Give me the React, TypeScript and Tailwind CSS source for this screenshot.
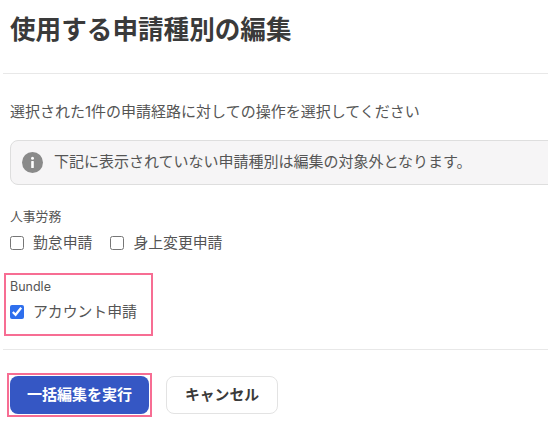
const FONT = "font-['Inter','Noto_Sans_CJK_JP',sans-serif]"

function Box({ label, checked = false }: { label: string; checked?: boolean }) {
  return (
    <label className="flex items-center gap-[9px] text-[14.85px] leading-[20px] text-[#555]">
      <input
        type="checkbox"
        defaultChecked={checked}
        className="m-0 h-[14px] w-[14px] accent-[#2f6fed]"
      />
      {label}
    </label>
  )
}

export default function App() {
  return (
    <div className={`${FONT} h-[427px] w-[548px] overflow-hidden bg-white pl-[3px]`}>
      <h1 className="pl-[7px] pt-[13px] text-[25.6px] font-bold leading-[34px] text-[#3a3a3a]">
        使用する申請種別の編集
      </h1>
      <div className="mt-[26px] h-px bg-[#e8e8e8]" />

      <p className="pl-[7px] pt-[28px] text-[15px] leading-[20px] text-[#555]">
        選択された1件の申請経路に対しての操作を選択してください
      </p>

      <div className="ml-[7px] mt-[18px] flex h-[45px] w-[560px] items-center gap-[11px] rounded-[8px] border border-[#dedede] bg-[#f6f5f6] pl-[11px] text-[15px] text-[#555]">
        <svg width="21" height="21" viewBox="0 0 21 21" className="shrink-0">
          <circle cx="10.5" cy="10.5" r="10.5" fill="#8a8a8a" />
          <circle cx="10.5" cy="6.2" r="1.5" fill="#fff" />
          <rect x="9.2" y="9" width="2.6" height="7" rx="0.6" fill="#fff" />
        </svg>
        下記に表示されていない申請種別は編集の対象外となります。
      </div>

      <div className="pl-[7px] pt-[23px]">
        <div className="text-[12.8px] leading-[18px] text-[#555]">人事労務</div>
        <div className="mt-[7px] flex gap-[18px]">
          <Box label="勤怠申請" />
          <Box label="身上変更申請" />
        </div>
      </div>

      <div className="ml-[1px] mt-[20px] h-[63px] w-[149px] border-2 border-[#f76d93] pl-[4px] pt-[3px]">
        <div className="text-[12.5px] leading-[18px] text-[#555]">Bundle</div>
        <div className="mt-[6px]">
          <Box label="アカウント申請" checked />
        </div>
      </div>

      <div className="mt-[13px] h-px bg-[#e8e8e8]" />

      <div className="flex items-center gap-[14px] pl-[4px] pt-[23px]">
        <div className="border-2 border-[#f76d93] p-px">
          <button className="block h-[38px] w-[139px] rounded-[8px] bg-[#3557c4] text-[15px] font-bold text-white">
            一括編集を実行
          </button>
        </div>
        <button className="h-[38px] w-[112px] rounded-[8px] border border-[#e3e3e3] bg-white text-[14.85px] font-bold text-[#3a3a3a]">
          キャンセル
        </button>
      </div>
    </div>
  )
}
